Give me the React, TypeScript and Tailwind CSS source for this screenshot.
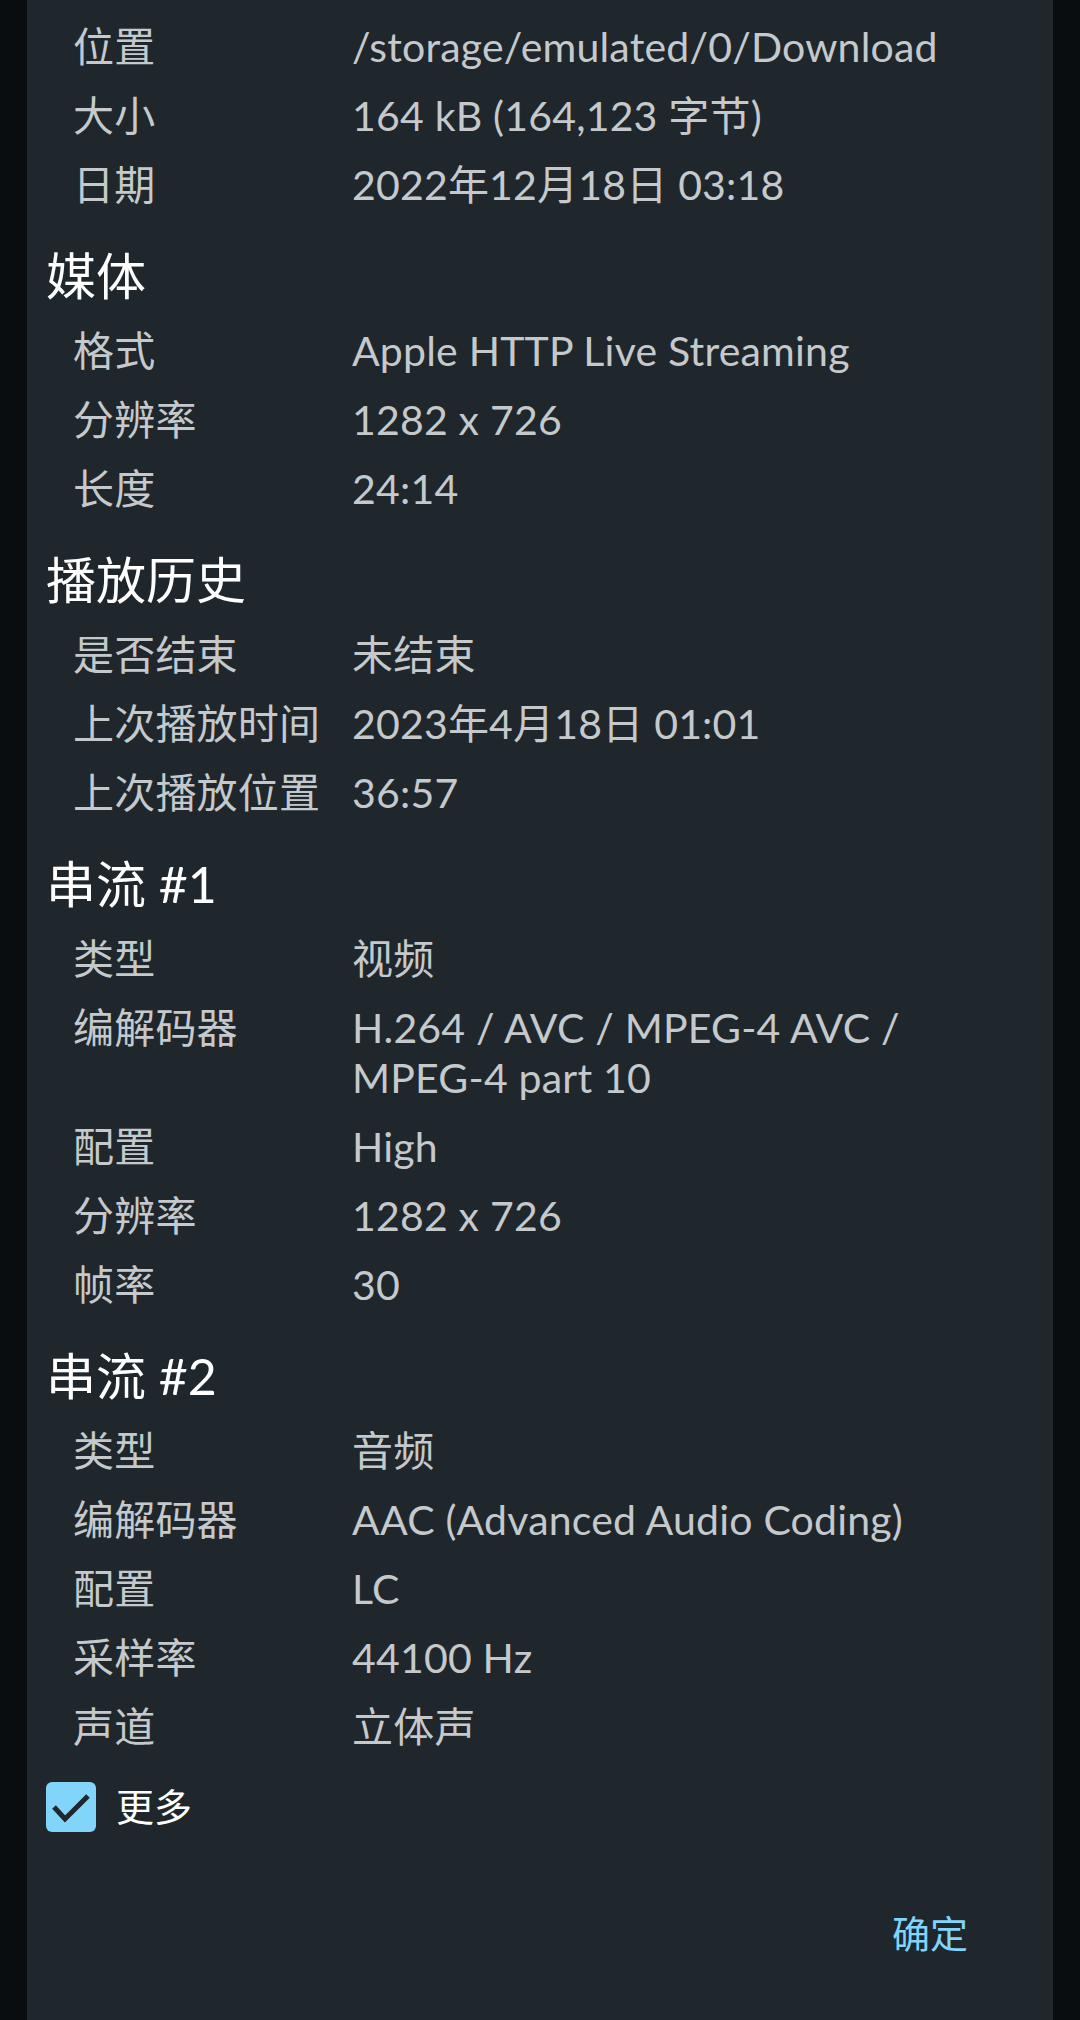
const sections: { title?: string; rows: [string, string][] }[] = [
  {
    rows: [
      ["位置", "/storage/emulated/0/Download"],
      ["大小", "164 kB (164,123 字节)"],
      ["日期", "2022年12月18日 03:18"],
    ],
  },
  {
    title: "媒体",
    rows: [
      ["格式", "Apple HTTP Live Streaming"],
      ["分辨率", "1282 x 726"],
      ["长度", "24:14"],
    ],
  },
  {
    title: "播放历史",
    rows: [
      ["是否结束", "未结束"],
      ["上次播放时间", "2023年4月18日 01:01"],
      ["上次播放位置", "36:57"],
    ],
  },
  {
    title: "串流 #1",
    rows: [
      ["类型", "视频"],
      ["编解码器", "H.264 / AVC / MPEG-4 AVC / MPEG-4 part 10"],
      ["配置", "High"],
      ["分辨率", "1282 x 726"],
      ["帧率", "30"],
    ],
  },
  {
    title: "串流 #2",
    rows: [
      ["类型", "音频"],
      ["编解码器", "AAC (Advanced Audio Coding)"],
      ["配置", "LC"],
      ["采样率", "44100 Hz"],
      ["声道", "立体声"],
    ],
  },
];

const font = { fontFamily: '"Lato", "Noto Sans CJK SC", sans-serif' };

export default function App() {
  return (
    <div className="flex h-[2020px] w-[1080px] bg-[#0a0d0f]" style={font}>
      <div className="ml-[27px] flex h-full w-[1026px] flex-col bg-[#1f272d] px-[19px] pt-[12px]">
        {sections.map((s, i) => (
          <div key={i}>
            {s.title && (
              <div className="mb-[10px] mt-[27px] text-[50px] leading-[60px] text-white">
                {s.title}
              </div>
            )}
            {s.rows.map(([k, v]) => (
              <div
                key={k}
                className="grid grid-cols-[279px_1fr] py-[9.5px] pl-[27px] text-[41px] leading-[50px] tracking-[0.2px] text-[#c5c9cc]"
              >
                <span>{k}</span>
                <span>{v}</span>
              </div>
            ))}
          </div>
        ))}
        <div className="mt-[17px] flex items-center gap-[20px]">
          <div className="flex h-[50px] w-[50px] items-center justify-center rounded-[6px] bg-[#81d4fa]">
            <svg width="50" height="50" viewBox="0 0 50 50" fill="none">
              <path d="M8 25l11 12L42 14" stroke="#1f272d" strokeWidth="5" />
            </svg>
          </div>
          <span className="text-[38px] text-white">更多</span>
        </div>
        <div className="mt-[70px] flex justify-end pr-[66px]">
          <span className="text-[38px] text-[#81d4fa]">确定</span>
        </div>
      </div>
    </div>
  );
}
